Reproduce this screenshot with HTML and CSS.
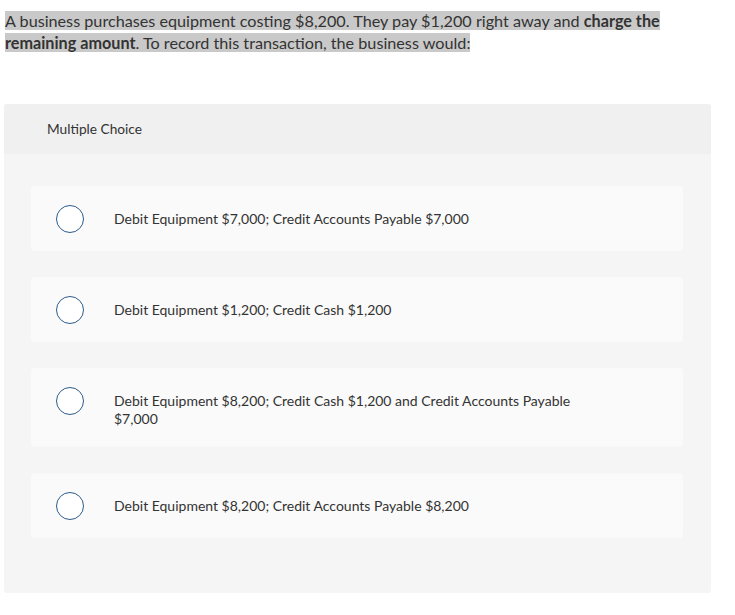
FILE: index.html
```html
<!DOCTYPE html>
<html>
<head>
<meta charset="utf-8">
<link rel="stylesheet" href="styles.css">
</head>
<body>
<div class="question"><p class="prompt"><span class="hl">A business purchases equipment costing $8,200. They pay $1,200 right away and <b>charge the remaining amount</b>. To record this transaction, the business would:</span></p></div>
<div class="card">
  <div class="card-head">Multiple Choice</div>
  <div class="options">
    <div class="option"><span class="radio"></span><span class="label">Debit Equipment $7,000; Credit Accounts Payable $7,000</span></div>
    <div class="option"><span class="radio"></span><span class="label">Debit Equipment $1,200; Credit Cash $1,200</span></div>
    <div class="option"><span class="radio"></span><span class="label">Debit Equipment $8,200; Credit Cash $1,200 and Credit Accounts Payable $7,000</span></div>
    <div class="option"><span class="radio"></span><span class="label">Debit Equipment $8,200; Credit Accounts Payable $8,200</span></div>
  </div>
</div>
</body>
</html>
```
FILE: styles.css
```css
html, body { margin: 0; padding: 0; background: #fff; }
body {
  font-family: Lato, "Open Sans", sans-serif;
  color: #333;
  padding: 10px 0 0 4px;
  width: 708px;
}
.question { padding-left: 1px; width: 668px; }
.prompt {
  margin: 0;
  font-size: 16.2px;
  line-height: 22px;
}
.hl { background: #c9c9c9; }
.hl b { font-weight: 700; }
.card {
  margin-top: 50px;
  background: #f5f5f5;
  border-radius: 3px;
  width: 707px;
  padding-bottom: 55px;
}
.card-head {
  background: #f0f0f0;
  height: 50px;
  box-sizing: border-box;
  padding: 16px 0 0 43px;
  font-size: 13.7px;
  line-height: 18px;
  color: #333;
  border-radius: 3px 3px 0 0;
}
.options {
  display: flex;
  flex-direction: column;
  gap: 26px;
  padding: 32px 28px 0 27px;
}
.option {
  display: flex;
  align-items: flex-start;
  background: #fafafa;
  border-radius: 4px;
  padding: 19px 25px 18px 25px;
}
.radio {
  flex: none;
  box-sizing: border-box;
  width: 28px;
  height: 28px;
  border: 1.5px solid #2d5b8a;
  border-radius: 50%;
  background: #fff;
}
.label {
  margin-left: 30px;
  font-size: 14px;
  line-height: 18px;
  padding: 5px 0 1px;
  max-width: 470px;
}
```
